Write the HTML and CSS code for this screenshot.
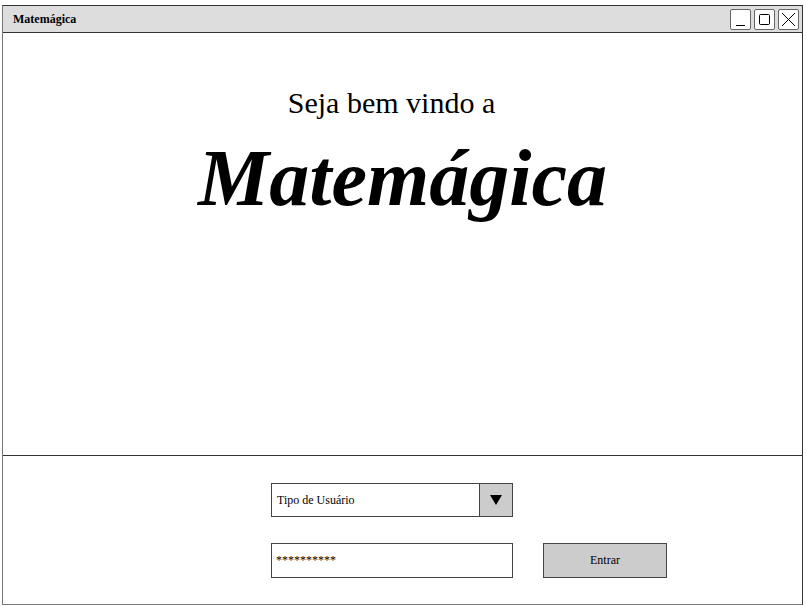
FILE: index.html
```html
<!DOCTYPE html>
<html>
<head>
<meta charset="utf-8">
<link rel="stylesheet" href="styles.css">
</head>
<body>
<div class="window">
  <div class="titlebar">
    <span class="title">Matemágica</span>
    <div class="controls">
      <div class="ctl"><svg width="19" height="19" viewBox="0 0 19 19"><line x1="5" y1="15.5" x2="14" y2="15.5" stroke="#000" stroke-width="1"/></svg></div>
      <div class="ctl"><svg width="19" height="19" viewBox="0 0 19 19"><rect x="4.5" y="4.5" width="10" height="10" rx="1" fill="none" stroke="#000" stroke-width="1"/></svg></div>
      <div class="ctl"><svg width="19" height="19" viewBox="0 0 19 19"><path d="M3 3 L16 16 M16 3 L3 16" stroke="#000" stroke-width="1"/></svg></div>
    </div>
  </div>
  <div class="hero">
    <div class="welcome">Seja bem vindo a</div>
    <div class="brand">Matemágica</div>
  </div>
  <div class="login">
    <div class="row">
      <div class="select">
        <span class="select-text">Tipo de Usuário</span>
        <span class="select-btn"><svg width="12" height="10" viewBox="0 0 12 10"><path d="M0 0 H12 L6 10 Z" fill="#000"/></svg></span>
      </div>
    </div>
    <div class="row row2">
      <div class="input">**********</div>
      <div class="button">Entrar</div>
    </div>
  </div>
</div>
</body>
</html>
```
FILE: styles.css
```css
html, body { margin: 0; padding: 0; background: #fff; }
body { font-family: "Liberation Serif", "Times New Roman", serif; color: #000; }
.window {
  margin: 5px 0 0 2px;
  width: 799px;
  height: 598px;
  border: 1px solid #333;
  border-left-color: #777;
  border-bottom-color: #777;
  display: flex;
  flex-direction: column;
}
.titlebar {
  height: 26px;
  background: #dddddd;
  border-bottom: 1px solid #333;
  display: flex;
  align-items: center;
  justify-content: space-between;
  padding: 0 3px 0 10px;
}
.title { font-weight: bold; font-size: 12px; }
.controls { display: flex; gap: 3px; margin-top: 1px; }
.ctl {
  width: 19px; height: 19px;
  border: 1px solid #666;
  border-radius: 2px;
  background: #fff;
  display: flex;
}
.hero {
  height: 422px;
  border-bottom: 1px solid #333;
  display: flex;
  flex-direction: column;
  align-items: center;
}
.welcome { font-size: 30px; line-height: 34px; margin-top: 53px; margin-right: 22px; }
.brand { font-size: 80px; font-weight: bold; font-style: italic; line-height: 90px; margin-top: 13px; }
.login { flex: 1; display: flex; flex-direction: column; padding: 27px 0 0 268px; }
.row { display: flex; }
.row2 { margin-top: 26px; gap: 30px; }
.select {
  width: 240px; height: 32px;
  border: 1px solid #444;
  display: flex;
  align-items: center;
  justify-content: space-between;
  font-size: 12px;
}
.select-text { padding-left: 5px; }
.select-btn {
  width: 32px; height: 32px;
  border-left: 1px solid #444;
  background: #cccccc;
  display: flex; align-items: center; justify-content: center;
}
.input {
  width: 236px; height: 33px;
  border: 1px solid #444;
  font-size: 12px;
  display: flex; align-items: center;
  padding-left: 4px;
}
.button {
  width: 122px; height: 33px;
  border: 1px solid #444;
  background: #cccccc;
  font-size: 12px;
  display: flex; align-items: center; justify-content: center;
}
```
